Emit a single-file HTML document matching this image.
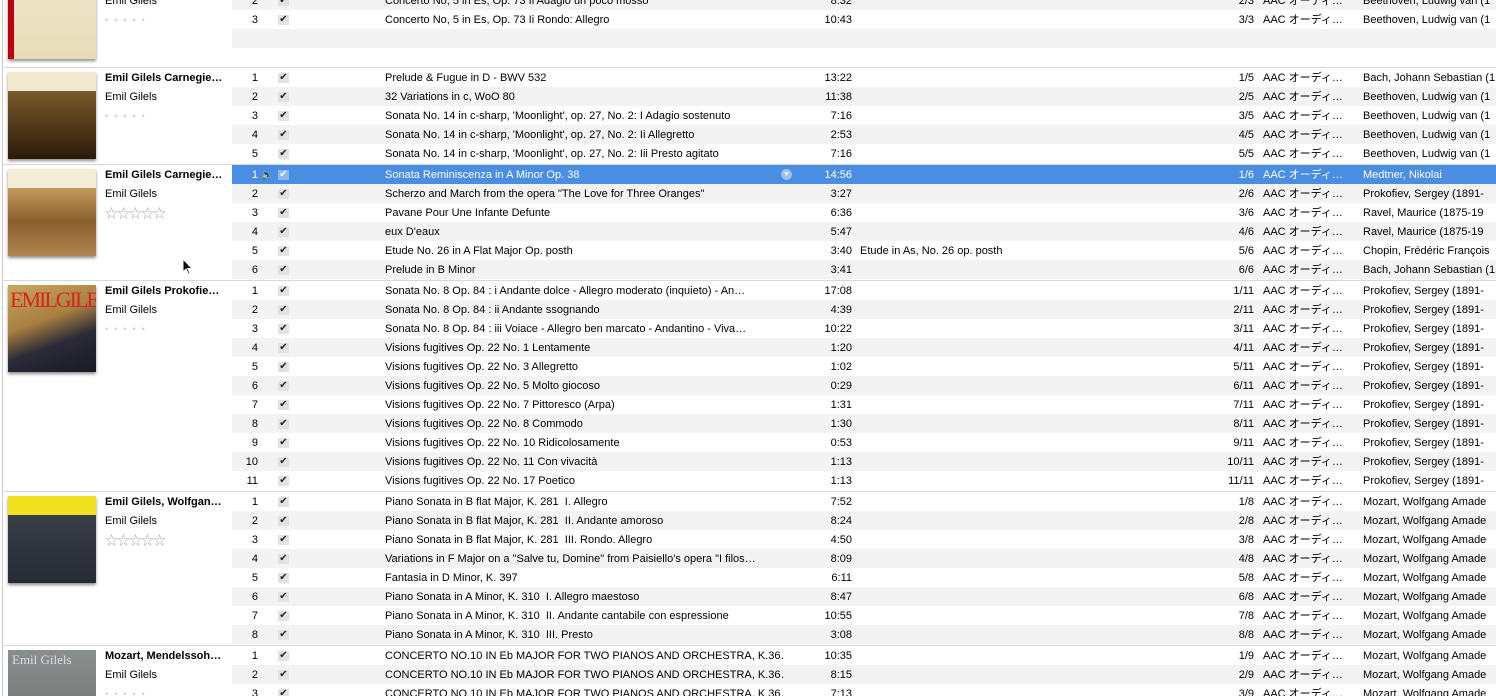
<!DOCTYPE html>
<html><head><meta charset="utf-8"><style>
*{margin:0;padding:0;box-sizing:border-box}
html,body{width:1496px;height:696px;overflow:hidden}
body{background:#fff;font-family:"Lucida Grande","Liberation Sans","Noto Sans CJK JP",sans-serif;font-size:11px;color:#000;position:relative}
.r{position:absolute;left:232px;right:0;height:19px;line-height:21px;white-space:nowrap;overflow:hidden}
.g{background:#f3f3f3}
.s{background:#4a8ee3;color:#fff}
.r span{position:absolute;top:0;overflow:hidden}
.n{left:0;width:26px;text-align:right}
.c{left:46px;top:5px!important;width:11px;height:10px;background:#e2e2e2;line-height:10px;font-size:10px;text-align:center;color:#222}
.s .c{background:#8fb6ec;color:#fff}
.t{left:153px;width:400px}
.d{left:560px;width:60px;text-align:right}
.x{left:628px;width:300px}
.k{left:990px;width:32px;text-align:right}
.kk{left:1031px;width:95px}
.a{left:1131px;width:140px}
.sep{position:absolute;left:2px;right:0;height:1px;background:#d8d8d8}
.vl{position:absolute;left:2px;top:0;width:1px;height:696px;background:#c8c8c8}
.art{position:absolute;left:8px;width:88px;height:87px;box-shadow:0 2px 3px rgba(0,0,0,.45);overflow:hidden}
.al{position:absolute;left:105px;width:125px;white-space:nowrap;overflow:hidden;line-height:21px;height:19px}
.b{font-weight:bold}
.dots{color:#d0d0d0;letter-spacing:6px;font-size:9px}
.stars{color:#aaa;font-size:13px;letter-spacing:-1px}
</style></head><body>
<div class="vl"></div>

<!-- group 1 -->
<div class="art" style="top:-28px;background:linear-gradient(#efe6cc,#e8dcb8)"><div style="position:absolute;left:0;top:0;width:6px;height:100%;background:#b01"></div><div style="position:absolute;left:20px;top:0;color:#c11;font:bold 20px 'Liberation Serif',serif">GILELS</div></div>
<div class="al" style="top:-9px">Emil Gilels</div>
<div class="al dots" style="top:10px">•••••</div>
<div class="r g" style="top:-9px"><span class="n">2</span><span class="c">✔</span><span class="t">Concerto No, 5 in Es, Op. 73 Ii Adagio un poco mosso</span><span class="d">8:32</span><span class="k">2/3</span><span class="kk">AAC オーディ…</span><span class="a">Beethoven, Ludwig van (1</span></div>
<div class="r" style="top:10px"><span class="n">3</span><span class="c">✔</span><span class="t">Concerto No, 5 in Es, Op. 73 Ii Rondo: Allegro</span><span class="d">10:43</span><span class="k">3/3</span><span class="kk">AAC オーディ…</span><span class="a">Beethoven, Ludwig van (1</span></div>
<div class="r g" style="top:29px"></div>
<div class="sep" style="top:67px"></div>

<!-- group 2 -->
<div class="art" style="top:72px;background:linear-gradient(#f1e9d0 0,#f1e9d0 22%,#7a5a2a 22%,#4a3215 70%,#2a1a08 100%)"></div>
<div class="al b" style="top:68px">Emil Gilels Carnegie…</div>
<div class="al" style="top:87px">Emil Gilels</div>
<div class="al dots" style="top:106px">•••••</div>
<div class="r" style="top:68px"><span class="n">1</span><span class="c">✔</span><span class="t">Prelude &amp; Fugue in D - BWV 532</span><span class="d">13:22</span><span class="k">1/5</span><span class="kk">AAC オーディ…</span><span class="a">Bach, Johann Sebastian (1</span></div>
<div class="r g" style="top:87px"><span class="n">2</span><span class="c">✔</span><span class="t">32 Variations in c, WoO 80</span><span class="d">11:38</span><span class="k">2/5</span><span class="kk">AAC オーディ…</span><span class="a">Beethoven, Ludwig van (1</span></div>
<div class="r" style="top:106px"><span class="n">3</span><span class="c">✔</span><span class="t">Sonata No. 14 in c-sharp, 'Moonlight', op. 27, No. 2: I Adagio sostenuto</span><span class="d">7:16</span><span class="k">3/5</span><span class="kk">AAC オーディ…</span><span class="a">Beethoven, Ludwig van (1</span></div>
<div class="r g" style="top:125px"><span class="n">4</span><span class="c">✔</span><span class="t">Sonata No. 14 in c-sharp, 'Moonlight', op. 27, No. 2: Ii Allegretto</span><span class="d">2:53</span><span class="k">4/5</span><span class="kk">AAC オーディ…</span><span class="a">Beethoven, Ludwig van (1</span></div>
<div class="r" style="top:144px"><span class="n">5</span><span class="c">✔</span><span class="t">Sonata No. 14 in c-sharp, 'Moonlight', op. 27, No. 2: Iii Presto agitato</span><span class="d">7:16</span><span class="k">5/5</span><span class="kk">AAC オーディ…</span><span class="a">Beethoven, Ludwig van (1</span></div>
<div class="sep" style="top:164px"></div>

<!-- group 3 -->
<div class="art" style="top:169px;background:linear-gradient(#f3ecd6 0,#f3ecd6 22%,#c49a5a 22%,#8a6030 60%,#b08550 100%)"></div>
<div class="al b" style="top:165px">Emil Gilels Carnegie…</div>
<div class="al" style="top:184px">Emil Gilels</div>
<div class="al stars" style="top:203px">☆☆☆☆☆</div>
<div class="r s" style="top:165px"><span class="n">1</span><span style="left:29px;font-size:10px">🔈</span><span class="c">✔</span><span class="t">Sonata Reminiscenza in A Minor Op. 38</span><span style="left:549px;top:4px;width:11px;height:11px;border-radius:50%;background:#9cc0f0;font-size:7px;line-height:11px;text-align:center">▼</span><span class="d">14:56</span><span class="k">1/6</span><span class="kk">AAC オーディ…</span><span class="a">Medtner, Nikolai</span></div>
<div class="r g" style="top:184px"><span class="n">2</span><span class="c">✔</span><span class="t">Scherzo and March from the opera "The Love for Three Oranges"</span><span class="d">3:27</span><span class="k">2/6</span><span class="kk">AAC オーディ…</span><span class="a">Prokofiev, Sergey (1891-</span></div>
<div class="r" style="top:203px"><span class="n">3</span><span class="c">✔</span><span class="t">Pavane Pour Une Infante Defunte</span><span class="d">6:36</span><span class="k">3/6</span><span class="kk">AAC オーディ…</span><span class="a">Ravel, Maurice (1875-19</span></div>
<div class="r g" style="top:222px"><span class="n">4</span><span class="c">✔</span><span class="t">eux D'eaux</span><span class="d">5:47</span><span class="k">4/6</span><span class="kk">AAC オーディ…</span><span class="a">Ravel, Maurice (1875-19</span></div>
<div class="r" style="top:241px"><span class="n">5</span><span class="c">✔</span><span class="t">Etude No. 26 in A Flat Major Op. posth</span><span class="d">3:40</span><span class="x">Etude in As, No. 26 op. posth</span><span class="k">5/6</span><span class="kk">AAC オーディ…</span><span class="a">Chopin, Frédéric François</span></div>
<div class="r g" style="top:260px"><span class="n">6</span><span class="c">✔</span><span class="t">Prelude in B Minor</span><span class="d">3:41</span><span class="k">6/6</span><span class="kk">AAC オーディ…</span><span class="a">Bach, Johann Sebastian (1</span></div>
<div class="sep" style="top:280px"></div>
<svg style="position:absolute;left:182px;top:258px" width="12" height="18" viewBox="0 0 12 18"><path d="M1 1 L1 14 L4 11 L6.5 16 L8 15.3 L5.7 10.5 L10 10.5 Z" fill="#000" stroke="#fff" stroke-width="1"/></svg>

<!-- group 4 -->
<div class="art" style="top:285px;background:linear-gradient(160deg,#c8a860 0,#a88040 40%,#2a2a3a 65%,#1a1a22 100%)"><div style="position:absolute;left:2px;top:2px;color:#d22;font:22px 'Liberation Serif',serif;letter-spacing:-2px;white-space:nowrap">EMILGILELS</div></div>
<div class="al b" style="top:281px">Emil Gilels Prokofie…</div>
<div class="al" style="top:300px">Emil Gilels</div>
<div class="al dots" style="top:319px">•••••</div>
<div class="r" style="top:281px"><span class="n">1</span><span class="c">✔</span><span class="t">Sonata No. 8 Op. 84 : i Andante dolce - Allegro moderato (inquieto) - An…</span><span class="d">17:08</span><span class="k">1/11</span><span class="kk">AAC オーディ…</span><span class="a">Prokofiev, Sergey (1891-</span></div>
<div class="r g" style="top:300px"><span class="n">2</span><span class="c">✔</span><span class="t">Sonata No. 8 Op. 84 : ii Andante ssognando</span><span class="d">4:39</span><span class="k">2/11</span><span class="kk">AAC オーディ…</span><span class="a">Prokofiev, Sergey (1891-</span></div>
<div class="r" style="top:319px"><span class="n">3</span><span class="c">✔</span><span class="t">Sonata No. 8 Op. 84 : iii Voiace - Allegro ben marcato - Andantino - Viva…</span><span class="d">10:22</span><span class="k">3/11</span><span class="kk">AAC オーディ…</span><span class="a">Prokofiev, Sergey (1891-</span></div>
<div class="r g" style="top:338px"><span class="n">4</span><span class="c">✔</span><span class="t">Visions fugitives Op. 22 No. 1 Lentamente</span><span class="d">1:20</span><span class="k">4/11</span><span class="kk">AAC オーディ…</span><span class="a">Prokofiev, Sergey (1891-</span></div>
<div class="r" style="top:357px"><span class="n">5</span><span class="c">✔</span><span class="t">Visions fugitives Op. 22 No. 3 Allegretto</span><span class="d">1:02</span><span class="k">5/11</span><span class="kk">AAC オーディ…</span><span class="a">Prokofiev, Sergey (1891-</span></div>
<div class="r g" style="top:376px"><span class="n">6</span><span class="c">✔</span><span class="t">Visions fugitives Op. 22 No. 5 Molto giocoso</span><span class="d">0:29</span><span class="k">6/11</span><span class="kk">AAC オーディ…</span><span class="a">Prokofiev, Sergey (1891-</span></div>
<div class="r" style="top:395px"><span class="n">7</span><span class="c">✔</span><span class="t">Visions fugitives Op. 22 No. 7 Pittoresco (Arpa)</span><span class="d">1:31</span><span class="k">7/11</span><span class="kk">AAC オーディ…</span><span class="a">Prokofiev, Sergey (1891-</span></div>
<div class="r g" style="top:414px"><span class="n">8</span><span class="c">✔</span><span class="t">Visions fugitives Op. 22 No. 8 Commodo</span><span class="d">1:30</span><span class="k">8/11</span><span class="kk">AAC オーディ…</span><span class="a">Prokofiev, Sergey (1891-</span></div>
<div class="r" style="top:433px"><span class="n">9</span><span class="c">✔</span><span class="t">Visions fugitives Op. 22 No. 10 Ridicolosamente</span><span class="d">0:53</span><span class="k">9/11</span><span class="kk">AAC オーディ…</span><span class="a">Prokofiev, Sergey (1891-</span></div>
<div class="r g" style="top:452px"><span class="n">10</span><span class="c">✔</span><span class="t">Visions fugitives Op. 22 No. 11 Con vivacità</span><span class="d">1:13</span><span class="k">10/11</span><span class="kk">AAC オーディ…</span><span class="a">Prokofiev, Sergey (1891-</span></div>
<div class="r" style="top:471px"><span class="n">11</span><span class="c">✔</span><span class="t">Visions fugitives Op. 22 No. 17 Poetico</span><span class="d">1:13</span><span class="k">11/11</span><span class="kk">AAC オーディ…</span><span class="a">Prokofiev, Sergey (1891-</span></div>
<div class="sep" style="top:491px"></div>

<!-- group 5 -->
<div class="art" style="top:496px;background:linear-gradient(#f0e020 0,#f0e020 22%,#3a3e48 22%,#262a34 100%)"></div>
<div class="al b" style="top:492px">Emil Gilels, Wolfgan…</div>
<div class="al" style="top:511px">Emil Gilels</div>
<div class="al stars" style="top:530px">☆☆☆☆☆</div>
<div class="r" style="top:492px"><span class="n">1</span><span class="c">✔</span><span class="t">Piano Sonata in B flat Major, K. 281&nbsp; I. Allegro</span><span class="d">7:52</span><span class="k">1/8</span><span class="kk">AAC オーディ…</span><span class="a">Mozart, Wolfgang Amade</span></div>
<div class="r g" style="top:511px"><span class="n">2</span><span class="c">✔</span><span class="t">Piano Sonata in B flat Major, K. 281&nbsp; II. Andante amoroso</span><span class="d">8:24</span><span class="k">2/8</span><span class="kk">AAC オーディ…</span><span class="a">Mozart, Wolfgang Amade</span></div>
<div class="r" style="top:530px"><span class="n">3</span><span class="c">✔</span><span class="t">Piano Sonata in B flat Major, K. 281&nbsp; III. Rondo. Allegro</span><span class="d">4:50</span><span class="k">3/8</span><span class="kk">AAC オーディ…</span><span class="a">Mozart, Wolfgang Amade</span></div>
<div class="r g" style="top:549px"><span class="n">4</span><span class="c">✔</span><span class="t">Variations in F Major on a "Salve tu, Domine" from Paisiello's opera "I filos…</span><span class="d">8:09</span><span class="k">4/8</span><span class="kk">AAC オーディ…</span><span class="a">Mozart, Wolfgang Amade</span></div>
<div class="r" style="top:568px"><span class="n">5</span><span class="c">✔</span><span class="t">Fantasia in D Minor, K. 397</span><span class="d">6:11</span><span class="k">5/8</span><span class="kk">AAC オーディ…</span><span class="a">Mozart, Wolfgang Amade</span></div>
<div class="r g" style="top:587px"><span class="n">6</span><span class="c">✔</span><span class="t">Piano Sonata in A Minor, K. 310&nbsp; I. Allegro maestoso</span><span class="d">8:47</span><span class="k">6/8</span><span class="kk">AAC オーディ…</span><span class="a">Mozart, Wolfgang Amade</span></div>
<div class="r" style="top:606px"><span class="n">7</span><span class="c">✔</span><span class="t">Piano Sonata in A Minor, K. 310&nbsp; II. Andante cantabile con espressione</span><span class="d">10:55</span><span class="k">7/8</span><span class="kk">AAC オーディ…</span><span class="a">Mozart, Wolfgang Amade</span></div>
<div class="r g" style="top:625px"><span class="n">8</span><span class="c">✔</span><span class="t">Piano Sonata in A Minor, K. 310&nbsp; III. Presto</span><span class="d">3:08</span><span class="k">8/8</span><span class="kk">AAC オーディ…</span><span class="a">Mozart, Wolfgang Amade</span></div>
<div class="sep" style="top:645px"></div>

<!-- group 6 -->
<div class="art" style="top:650px;height:46px;box-shadow:none;background:linear-gradient(#8a8e8c,#7a7e7c)"><div style="position:absolute;left:4px;top:2px;color:#dde;font:13px 'Liberation Serif',serif">Emil Gilels</div></div>
<div class="al b" style="top:646px">Mozart, Mendelssoh…</div>
<div class="al" style="top:665px">Emil Gilels</div>
<div class="al dots" style="top:684px;height:12px">•••••</div>
<div class="r" style="top:646px"><span class="n">1</span><span class="c">✔</span><span class="t">CONCERTO NO.10 IN Eb MAJOR FOR TWO PIANOS AND ORCHESTRA, K.36…</span><span class="d">10:35</span><span class="k">1/9</span><span class="kk">AAC オーディ…</span><span class="a">Mozart, Wolfgang Amade</span></div>
<div class="r g" style="top:665px"><span class="n">2</span><span class="c">✔</span><span class="t">CONCERTO NO.10 IN Eb MAJOR FOR TWO PIANOS AND ORCHESTRA, K.36…</span><span class="d">8:15</span><span class="k">2/9</span><span class="kk">AAC オーディ…</span><span class="a">Mozart, Wolfgang Amade</span></div>
<div class="r" style="top:684px;height:12px"><span class="n">3</span><span class="c">✔</span><span class="t">CONCERTO NO.10 IN Eb MAJOR FOR TWO PIANOS AND ORCHESTRA, K.36…</span><span class="d">7:13</span><span class="k">3/9</span><span class="kk">AAC オーディ…</span><span class="a">Mozart, Wolfgang Amade</span></div>
</body></html>
